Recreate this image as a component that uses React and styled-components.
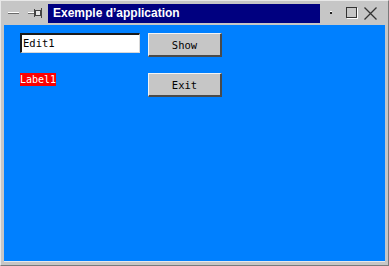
import styled, { createGlobalStyle } from "styled-components"

const Global = createGlobalStyle`
    html, body {
        margin: 0;
        padding: 0;
        background: #c6c6c6;
    }
`;

const Window = styled.div`
    width: 389px;
    height: 266px;
    box-sizing: border-box;
    background: #c6c6c6;
    border-top: 1px solid #e8e8e8;
    border-left: 1px solid #e8e8e8;
    border-right: 1px solid #7a7a7a;
    border-bottom: 1px solid #7a7a7a;
    display: flex;
    flex-direction: column;
`;

const TitleBar = styled.div`
    height: 24px;
    display: flex;
    align-items: center;
    padding: 0 11px 0 6px;
`;

const IconSlot = styled.div`
    width: ${p => p.$w || 16}px;
    height: 16px;
    display: flex;
    align-items: center;
    justify-content: center;
    margin-right: ${p => p.$gap || 0}px;
`;

const Caption = styled.div`
    flex: 1;
    height: 19px;
    margin: 0 9px 0 0;
    background: #000080;
    color: #fff;
    font-family: "Liberation Sans", Arial, sans-serif;
    font-weight: bold;
    font-size: 12px;
    line-height: 19px;
    padding-left: 5px;
    white-space: nowrap;
`;

const Client = styled.div`
    flex: 1;
    margin: 0 3px 3px 3px;
    background: #0080ff;
    border-bottom: 1px solid #e8e8e8;
    display: grid;
    grid-template-columns: 120px 74px;
    grid-template-rows: 24px 24px;
    column-gap: 8px;
    row-gap: 16px;
    align-content: start;
    align-items: start;
    padding: 8px 0 0 16px;
`;

const Edit = styled.div`
    height: 20px;
    box-sizing: border-box;
    background: #fff;
    border-top: 2px solid #1a1a1a;
    border-left: 2px solid #1a1a1a;
    border-right: 1px solid #d8d8d8;
    border-bottom: 1px solid #d8d8d8;
    font-family: "DejaVu Sans Mono", monospace;
    font-size: 10.5px;
    line-height: 17px;
    padding-left: 1px;
    color: #000;
`;

const Button = styled.div`
    height: 24px;
    box-sizing: border-box;
    background: #c6c6c6;
    border-top: 1px solid #f4f4f4;
    border-left: 1px solid #f4f4f4;
    border-right: 2px solid #4a4a4a;
    border-bottom: 2px solid #4a4a4a;
    display: flex;
    align-items: center;
    justify-content: center;
    font-family: "DejaVu Sans Mono", monospace;
    font-size: 10.5px;
    color: #000;
`;

const Label = styled.div`
    justify-self: start;
    background: #ff0000;
    color: #fff;
    font-family: "DejaVu Sans Mono", monospace;
    font-size: 10px;
    line-height: 13px;
    height: 13px;
`;

function Minus() {
    return (
        <svg width="12" height="6" viewBox="0 0 12 6">
            <rect x="1" y="2" width="11" height="1" fill="#fff" />
            <rect x="1" y="3" width="11" height="1" fill="#6a6a6a" />
        </svg>
    );
}

function Pin() {
    return (
        <svg width="16" height="12" viewBox="0 0 16 12">
            <rect x="0" y="5" width="6" height="1" fill="#fff" />
            <rect x="0" y="6" width="6" height="1" fill="#6a6a6a" />
            <rect x="6" y="2" width="1" height="8" fill="#444" />
            <rect x="7.5" y="3.5" width="5" height="5" fill="#e8e8e8" stroke="#444" />
            <rect x="13" y="1" width="1" height="10" fill="#444" />
        </svg>
    );
}

function Dot() {
    return (
        <svg width="4" height="4" viewBox="0 0 4 4">
            <rect x="1" y="1" width="2" height="2" fill="#222" />
            <rect x="1" y="0" width="2" height="1" fill="#fff" />
        </svg>
    );
}

function Maximize() {
    return (
        <svg width="12" height="12" viewBox="0 0 12 12">
            <rect x="0.5" y="0.5" width="10" height="10" fill="none" stroke="#333" />
            <line x1="1" y1="11.5" x2="12" y2="11.5" stroke="#fff" />
            <line x1="11.5" y1="1" x2="11.5" y2="12" stroke="#fff" />
        </svg>
    );
}

function Close() {
    return (
        <svg width="13" height="13" viewBox="0 0 13 13">
            <path d="M0.5 0.5 L12.5 12.5 M12.5 0.5 L0.5 12.5" stroke="#333" strokeWidth="1.3" />
        </svg>
    );
}

export default function App() {
    return (
        <>
            <Global />
            <Window>
                <TitleBar>
                    <IconSlot $w={12} $gap={9}><Minus /></IconSlot>
                    <IconSlot $w={16} $gap={4}><Pin /></IconSlot>
                    <Caption>Exemple d’application</Caption>
                    <IconSlot $w={4} $gap={13}><Dot /></IconSlot>
                    <IconSlot $w={12} $gap={6}><Maximize /></IconSlot>
                    <IconSlot $w={13}><Close /></IconSlot>
                </TitleBar>
                <Client>
                    <Edit>Edit1</Edit>
                    <Button>Show</Button>
                    <Label>Label1</Label>
                    <Button>Exit</Button>
                </Client>
            </Window>
        </>
    );
}
